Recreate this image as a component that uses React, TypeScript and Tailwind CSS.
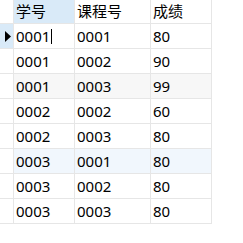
const rows = [
  ["0001", "0001", "80"],
  ["0001", "0002", "90"],
  ["0001", "0003", "99"],
  ["0002", "0002", "60"],
  ["0002", "0003", "80"],
  ["0003", "0001", "80"],
  ["0003", "0002", "80"],
  ["0003", "0003", "80"],
];

const font = { fontFamily: '"Noto Sans", "Noto Sans CJK SC", sans-serif' };

export default function App() {
  return (
    <div className="w-[243px] h-[243px] bg-white text-black text-[15px] leading-none" style={font}>
      <div className="w-[212px]">
        {/* header */}
        <div className="flex h-6 border-b border-[#e6e6e6]">
          <div className="w-[14px] border-r border-[#e6e6e6]" />
          <div className="w-[61px] bg-[#d9eaf8] border-r border-[#e6e6e6] pl-[2px] flex items-center">学号</div>
          <div className="w-[76px] border-r border-[#e6e6e6] pl-[2px] flex items-center">课程号</div>
          <div className="w-[61px] border-r border-[#e6e6e6] pl-[2px] flex items-center">成绩</div>
        </div>
        {rows.map((r, i) => {
          const rowBg = i === 5 ? "bg-[#f1f7fd]" : i === 2 ? "bg-[#f7f7f7]" : "bg-white";
          return (
            <div key={i} className="flex h-[25px] border-b border-[#e6e6e6]">
              <div className={`w-[14px] border-r border-[#e6e6e6] flex items-center ${i === 0 ? "bg-[#d9eaf8]" : ""}`}>
                {i === 0 && (
                  <svg width="13" height="24" viewBox="0 0 13 24">
                    <polygon points="5,7 11,12.5 5,18" fill="#000" />
                  </svg>
                )}
              </div>
              <div className={`w-[61px] border-r border-[#e6e6e6] pl-[2px] flex items-center ${rowBg}`}>
                {r[0]}
                {i === 0 && <span className="ml-[1px] w-px h-[15px] bg-black" />}
              </div>
              <div className={`w-[76px] border-r border-[#e6e6e6] pl-[2px] flex items-center ${rowBg}`}>{r[1]}</div>
              <div className={`w-[61px] border-r border-[#e6e6e6] pl-[2px] flex items-center ${rowBg}`}>{r[2]}</div>
            </div>
          );
        })}
      </div>
    </div>
  );
}
